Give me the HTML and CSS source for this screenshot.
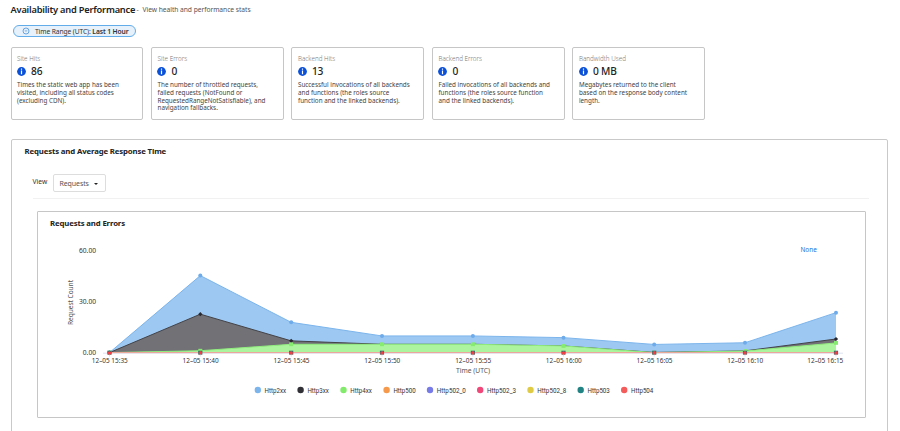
FILE: index.html
```html
<!DOCTYPE html>
<html lang="en">
<head>
<meta charset="utf-8">
<title>Availability and Performance</title>
<link rel="stylesheet" href="styles.css">
</head>
<body>
<svg width="0" height="0" class="defs">
  <symbol id="info" viewBox="0 0 9 9"><circle cx="4.5" cy="4.5" r="4.4" fill="#0b50d8"/><path d="M4.5 1.6v1.2M4.5 3.6v3.7" stroke="#fff" stroke-width="1.2"/></symbol>
</svg>
<header class="heading"><h1>Availability and Performance</h1><span class="dash">-</span><span class="subtitle">View health and performance stats</span></header>
<div class="filters">
  <button class="pill">
    <svg class="clock" viewBox="0 0 8 8"><circle cx="4" cy="4" r="3" fill="none" stroke="#4a92d8" stroke-width=".8"/><path d="M2.7 3.2 4 4.4 5.3 3.2" fill="none" stroke="#4a92d8" stroke-width=".7"/></svg>
    <span class="range">Time Range (UTC): <b>Last 1 Hour</b></span>
  </button>
</div>
<main>
  <section class="cards">
    <article class="card"><h2>Site Hits</h2><div class="value"><svg><use href="#info"/></svg><span>86</span></div><p>Times the static web app has been<br>visited, including all status codes<br>(excluding CDN).</p></article>
    <article class="card"><h2>Site Errors</h2><div class="value"><svg><use href="#info"/></svg><span>0</span></div><p>The number of throttled requests,<br>failed requests (NotFound or<br>RequestedRangeNotSatisfiable), and<br>navigation fallbacks.</p></article>
    <article class="card"><h2>Backend Hits</h2><div class="value"><svg><use href="#info"/></svg><span>13</span></div><p>Successful invocations of all backends<br>and functions (the roles source<br>function and the linked backends).</p></article>
    <article class="card"><h2>Backend Errors</h2><div class="value"><svg><use href="#info"/></svg><span>0</span></div><p>Failed invocations of all backends and<br>functions (the roles source function<br>and the linked backends).</p></article>
    <article class="card"><h2>Bandwidth Used</h2><div class="value"><svg><use href="#info"/></svg><span>0 MB</span></div><p>Megabytes returned to the client<br>based on the response body content<br>length.</p></article>
  </section>
  <section class="panel">
    <h2 class="panel-title">Requests and Average Response Time</h2>
    <div class="toolbar">
      <span class="view">View</span>
      <button class="select"><span>Requests</span><i class="caret"></i></button>
    </div>
    <div class="chart-panel">
      <h3>Requests and Errors</h3>
      <svg id="chart" class="chart" viewBox="38 233 827 183"></svg>
    </div>
  </section>
</main>
<script src="chart.js"></script>
</body>
</html>
```
FILE: styles.css
```css
* { box-sizing: border-box; }
html, body { margin: 0; background: #fff; }
body { height: 431px; overflow: hidden; padding: 3px 12px 0 10.5px; font-family: "Noto Sans", "Open Sans", sans-serif; color: #333; }
h1, h2, h3, p { margin: 0; }
button { font: inherit; background: none; margin: 0; }
.defs { display: block; height: 0; }
.heading { display: flex; align-items: center; height: 13px; white-space: nowrap; }
h1 { font-size: 9.3px; font-weight: 600; width: 126px; letter-spacing: -.22px; color: #222; }
.dash { width: 6px; font-size: 7px; color: #666; }
.subtitle { font-size: 6.7px; color: #555; letter-spacing: -.04px; }
.filters { height: 31px; padding: 9px 0 0 2.5px; }
.pill { display: flex; align-items: center; width: 123px; height: 12px; padding: 0 0 0 8px; border: 1px solid #62acea; border-radius: 6px; background: #e6f1fb; color: #333; white-space: nowrap; }
.clock { width: 8px; height: 8px; margin-right: 5px; flex: none; }
.range { font-size: 6.7px; letter-spacing: -.1px; }
.range b { font-weight: 600; }
.cards { display: flex; gap: 7.7px; }
.card { width: 132.8px; height: 72.5px; flex: none; border: 1.4px solid #c6c6c6; border-radius: 2px; padding: 5.5px 5px 0 5.5px; white-space: nowrap; }
.card h2 { font-size: 6.3px; line-height: 9px; font-weight: 300; color: #777; }
.value { display: flex; align-items: center; height: 17px; font-size: 10.2px; font-weight: 500; color: #222; }
.value svg { width: 9px; height: 9px; margin: 1px 5px 0 0; }
.value span { letter-spacing: -.2px; }
.card p { font-size: 6.3px; line-height: 7.8px; margin-top: 1.5px; color: #444; }
.panel { margin-top: 19.5px; width: 877.5px; height: 310px; border: 1.4px solid #c9c9c9; border-radius: 2px; padding: 5px 21px 0 12px; }
.panel-title { font-size: 7.8px; line-height: 13px; font-weight: 700; color: #222; letter-spacing: -.15px; padding-left: 1px; }
.toolbar { display: flex; height: 40px; margin: 0 0 13px 9px; padding-top: 17px; border-bottom: 1px solid #f1f1f1; width: 836px; }
.toolbar { height: 41px; margin-bottom: 12px; }
.view { font-size: 6.7px; line-height: 14px; width: 20px; }
.select { display: flex; align-items: center; width: 53px; height: 18px; margin-top: -1px; padding: 0 6px; border: 1px solid #ddd; border-radius: 2px; font-size: 7px; color: #555; letter-spacing: -.1px; flex: none; }
.caret { width: 0; height: 0; margin: 2px 0 0 5px; border: 2.3px solid transparent; border-top: 2.8px solid #222; border-bottom: 0; }
.chart-panel { width: 829px; height: 206.5px; margin-left: 13px; border: 1.4px solid #c6c6c6; border-radius: 1px; padding: 5px 0 0; }
.chart-panel h3 { font-size: 7.8px; line-height: 13px; font-weight: 700; color: #222; letter-spacing: -.15px; padding-left: 12.5px; }
.chart { display: block; width: 827px; height: 183px; margin-top: 3px; }
.chart text { font-size: 6.3px; fill: #444; }
.chart .legend { font-family: Roboto, sans-serif; font-size: 6.8px; fill: #333; }
.chart .axis-title { fill: #555; }
.chart .tick { fill: #333; }
.chart .link { fill: #1674e0; }
```
FILE: chart.js
```js
const chart = document.getElementById('chart');
const base = 352.6;
const xs = [109.5, 200.3, 291.2, 382, 472.9, 563.5, 654.2, 745, 836];
const at = v => base - v * 1.7;
const series = [
  { fill: '#9dc8f2', line: '#7cb5ec', shape: 'circle', data: [0, 45.3, 17.8, 9.8, 9.8, 8.8, 4.8, 5.8, 23.5] },
  { fill: '#717176', line: '#434348', shape: 'diamond', data: [0, 22.6, 6.9, 4.9, 4.9, 3.9, 0.1, 1, 8] },
  { fill: '#acf49e', line: '#90ed7d', shape: 'square', data: [0, 1.1, 4.9, 4.9, 4.9, 3.9, 0, 0.9, 5.7] }
];
let out = '';
const text = (x, y, s, w, anchor, cls) =>
  `<text x="${x}" y="${y}" text-anchor="${anchor}" class="${cls}" textLength="${w}" lengthAdjust="spacingAndGlyphs">${s}</text>`;

out += text(96, 253.2, '60.00', 17, 'end', 'tick');
out += text(96, 304, '30.00', 17, 'end', 'tick');
out += text(96, 354.8, '0.00', 13.2, 'end', 'tick');
out += `<g transform="translate(72.5 302.5) rotate(-90)">${text(0, 0, 'Request Count', 45, 'middle', 'axis-title')}</g>`;
out += text(800.5, 251.6, 'None', 16.3, 'start', 'link');
out += `<path d="M103 353.2H843" stroke="#ccd6eb" stroke-width=".7"/>`;

for (const s of series) {
  const pts = s.data.map((v, i) => `${xs[i]},${at(v)}`).join(' ');
  out += `<polygon points="${xs[0]},${base} ${pts} ${xs[8]},${base}" fill="${s.fill}"/>`;
  out += `<polyline points="${pts}" fill="none" stroke="${s.line}" stroke-width="1"/>`;
}
out += `<path d="M${xs[0]} ${base}H${xs[8]}" stroke="#f2a39b" stroke-width="1"/>`;
for (const s of series) {
  s.data.forEach((v, i) => {
    const x = xs[i], y = at(v);
    if (s.shape === 'circle') out += `<circle cx="${x}" cy="${y}" r="2" fill="#6eabea"/>`;
    if (s.shape === 'diamond' && (i < 3 || i === 8)) out += `<path d="M${x} ${y - 2.1}l2.1 2.1-2.1 2.1-2.1-2.1z" fill="#28282e"/>`;
    if (s.shape === 'square') out += `<rect x="${x - 2}" y="${y - 1.9}" width="4" height="3.8" fill="#86ec70"/>`;
  });
}
xs.forEach((x, i) => {
  out += `<rect x="${x - 2.1}" y="${base - 1.9}" width="4.2" height="3.9" fill="#2b7474"/><path d="M${x - 1.5} ${base + 1.8}v-2.5l1.5-.8 1.5.8v2.5z" fill="#f03f45"/>`;
  out += `<path d="M${x} 354.6v2" stroke="#ccd6eb" stroke-width=".7"/>`;
  const m = ['15:35', '15:40', '15:45', '15:50', '15:55', '16:00', '16:05', '16:10', '16:15'][i];
  out += text(i === 8 ? 825.3 : x + .3, 363, '12–05 ' + m, 36, 'middle', 'tick');
});
out += text(473, 373, 'Time (UTC)', 34, 'middle', 'axis-title');

const legend = [
  ['Http2xx', 257.8, 21.5, '#7cb5ec'], ['Http3xx', 300.6, 21.5, '#303036'], ['Http4xx', 343.5, 21.5, '#83eb6b'],
  ['Http500', 386.6, 22.3, '#f7994b'], ['Http502_0', 430, 29, '#777be8'], ['Http502_3', 480.2, 29, '#f1487a'],
  ['Http502_8', 530.5, 29, '#e0cb45'], ['Http503', 580.7, 22.3, '#218383'], ['Http504', 624.2, 22.3, '#f45b5b']
];
for (const [name, x, w, color] of legend) {
  out += `<circle cx="${x}" cy="390" r="3.2" fill="${color}"/>` + text(x + 6.8, 392.6, name, w, 'start', 'legend');
}
chart.innerHTML = out;
```
